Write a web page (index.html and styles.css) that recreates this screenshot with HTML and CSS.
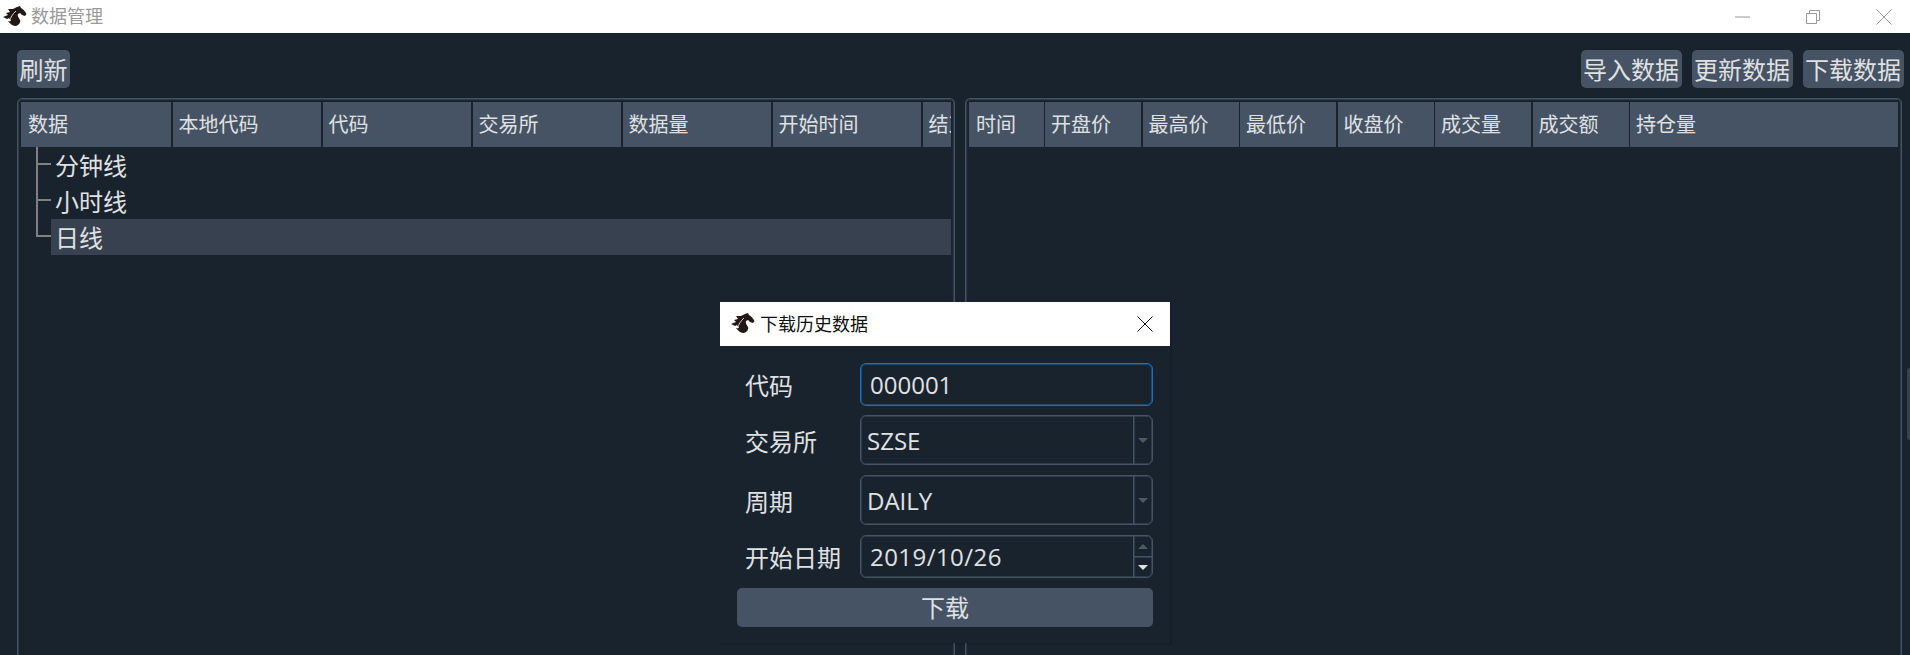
FILE: index.html
```html
<!DOCTYPE html>
<html lang="zh">
<head>
<meta charset="utf-8">
<title>数据管理</title>
<link rel="stylesheet" href="styles.css">
</head>
<body>
<svg class="defs" width="0" height="0" aria-hidden="true">
  <symbol id="horse" viewBox="0 0 24 22">
    <path d="M0 11 L5 9 L3 7 L7 6 L5 3 L10 3 L14 1 L17 0 L18 2 C20 3 22 5 23.5 8 L22 10 L19 9 L17 7 L15 8 C14 10 16 12 17 14 C18 16 16 19 13 20 C10 20 7 18 5 15 L8 15 L6 12 L4 13 Z" fill="#231815"/>
    <path d="M6.5 15.5 C7.5 11.5 9.5 8 13 5" fill="none" stroke="#fff" stroke-width=".8"/>
  </symbol>
</svg>
<div class="window">
  <header class="titlebar">
    <svg class="logo"><use href="#horse"/></svg>
    <span class="title">数据管理</span>
    <div class="winctl">
      <svg class="min" width="16" height="2" viewBox="0 0 16 2"><path d="M0 1H15" stroke="#999" stroke-width="1"/></svg>
      <svg width="16" height="16" viewBox="0 0 16 16"><path d="M1.5 4.5H11.5V14.5H1.5ZM4.5 4.5V1.5H14.5V11.5H11.5" fill="none" stroke="#999"/></svg>
      <svg width="16" height="16" viewBox="0 0 16 16"><path d="M.5 .5L15.5 15.5M15.5 .5L.5 15.5" stroke="#999"/></svg>
    </div>
  </header>
  <main class="content">
    <div class="toolbar">
      <button class="btn">刷新</button>
      <div class="spacer"></div>
      <button class="btn">导入数据</button>
      <button class="btn">更新数据</button>
      <button class="btn">下载数据</button>
    </div>
    <div class="panes">
      <section class="pane pane-left">
        <div class="thead">
          <div class="th w150 first">数据</div>
          <div class="th w150">本地代码</div>
          <div class="th w150">代码</div>
          <div class="th w150">交易所</div>
          <div class="th w150">数据量</div>
          <div class="th w150">开始时间</div>
          <div class="th rest">结束时间</div>
        </div>
        <div class="tree">
          <div class="row"><span class="branch"></span><span class="label">分钟线</span></div>
          <div class="row"><span class="branch"></span><span class="label">小时线</span></div>
          <div class="row last"><span class="branch"></span><span class="label sel">日线</span></div>
        </div>
      </section>
      <section class="pane pane-right">
        <div class="thead">
          <div class="th w75">时间</div>
          <div class="th w97">开盘价</div>
          <div class="th w97">最高价</div>
          <div class="th w97">最低价</div>
          <div class="th w97">收盘价</div>
          <div class="th w97">成交量</div>
          <div class="th w97">成交额</div>
          <div class="th rest">持仓量</div>
        </div>
      </section>
    </div>
    <div class="grip"></div>
  </main>
  <div class="dialog">
    <div class="dlg-title">
      <svg class="logo"><use href="#horse"/></svg>
      <span>下载历史数据</span>
      <svg class="dlg-close" width="16" height="16" viewBox="0 0 16 16"><path d="M.5 .5L15.5 15.5M15.5 .5L.5 15.5" stroke="#111"/></svg>
    </div>
    <div class="form">
      <div class="field f-code"><label>代码</label><div class="ctl focus"><span class="val">000001</span></div></div>
      <div class="field f-combo"><label>交易所</label><div class="ctl"><span class="val combo">SZSE</span><span class="drop"><i class="tri down dim"></i></span></div></div>
      <div class="field f-combo"><label>周期</label><div class="ctl"><span class="val combo">DAILY</span><span class="drop"><i class="tri down dim"></i></span></div></div>
      <div class="field f-date"><label>开始日期</label><div class="ctl"><span class="val date">2019/10/26</span><span class="spin"><span><i class="tri up dim"></i></span><span><i class="tri down"></i></span></span></div></div>
      <button class="btn dl">下载</button>
    </div>
  </div>
</div>
</body>
</html>
```

FILE: styles.css
```css
* { box-sizing: border-box; }
html, body { margin: 0; height: 100%; overflow: hidden; }
body {
  background: #19232D;
  color: #E0E1E3;
  font-family: "Open Sans", "Noto Sans CJK SC", sans-serif;
}
.defs { position: absolute; }
.window { position: relative; height: 655px; display: flex; flex-direction: column; }

.titlebar {
  height: 33px; background: #fff; display: flex; align-items: center;
  padding-left: 3px; flex: none;
}
.logo { width: 24px; height: 22px; flex: none; }
.title { color: #999; font-size: 18px; margin-left: 4px; line-height: 33px; }
.winctl { margin-left: auto; margin-right: 18px; display: flex; align-items: center; gap: 55px; }
.winctl .min { margin-right: -1px; }

.content { flex: 1; min-height: 0; padding: 17px 8px 0 17px; display: flex; flex-direction: column; position: relative; }
.toolbar { display: flex; gap: 10px; height: 38px; flex: none; margin-right: -1.5px; }
.spacer { flex: 1; }
.btn {
  background: #455364; color: #E0E1E3; border: 0; border-radius: 5px;
  font: inherit; font-size: 24px; line-height: 38px; height: 38px; padding: 1px 2.5px 0; white-space: nowrap;
}
.panes { display: flex; flex: 1; min-height: 0; margin-top: 10px; gap: 10px; margin-bottom: -8px; }
.pane {
  border: 1px solid #455364; border-radius: 5px; padding: 3px 3px 0; overflow: hidden;
  box-shadow: inset 0 0 0 1px rgba(69, 83, 100, .5);
}
.pane-left { width: 938px; flex: none; }
.pane-right { flex: 1; min-width: 0; }

.thead { display: flex; height: 45px; overflow: hidden; }
.th {
  background: #455364; font-size: 20px; line-height: 45px; padding-left: 6px;
  margin-right: 1.5px; flex: none; white-space: nowrap; overflow: hidden;
}
.th.w150 { width: 148.5px; }
.th.w150.first { width: 150px; padding-left: 7px; }
.th.w75 { width: 74.5px; padding-left: 7px; }
.th.w97 { width: 96px; }
.th.rest { flex: 1; min-width: 0; margin-right: 0; }

.tree { display: flex; flex-direction: column; }
.row { height: 36px; display: flex; position: relative; padding-left: 30px; }
.branch { position: absolute; left: 15px; top: 0; width: 15px; height: 18px; border-left: 2px solid #808080; border-bottom: 2px solid #808080; }
.row:not(.last) .branch { height: 36px; border-bottom: 0; }
.row:not(.last) .branch::after { content: ""; position: absolute; left: 0; top: 16px; width: 13px; height: 2px; background: #808080; }
.label { flex: 1; font-size: 24px; line-height: 37px; padding-left: 4px; }
.sel { background: #37414F; padding-left: 4px; }

.dialog {
  position: absolute; left: 720px; top: 302px; width: 450px; height: 341px;
  background: #19232D; box-shadow: 1px 1px 2px rgba(0,0,0,.2);
  display: flex; flex-direction: column;
}
.dlg-title { height: 44px; background: #fff; color: #111; display: flex; align-items: center; font-size: 18px; padding-left: 11px; flex: none; }
.dlg-title span { margin-left: 5px; line-height: 42px; }
.dlg-close { margin-left: auto; margin-right: 17px; }
.form { padding: 17px 17px 0; display: flex; flex-direction: column; }
.field { display: flex; align-items: stretch; }
.field label { width: 123px; padding-left: 8px; font-size: 24px; flex: none; display: flex; align-items: center; white-space: nowrap; }
.ctl {
  flex: 1; border: 1px solid #455364; border-radius: 6px; display: flex; font-size: 24px; overflow: hidden;
  box-shadow: inset 0 0 0 1px rgba(69, 83, 100, .5);
}
.ctl.focus { border-color: #1A72BB; box-shadow: inset 0 0 0 1px rgba(26, 114, 187, .5); }
.f-code { height: 43px; margin-bottom: 9px; }
.f-combo { height: 50px; margin-bottom: 10px; }
.f-date { height: 43px; margin-bottom: 10px; }
.val { flex: 1; padding-left: 9px; display: flex; align-items: center; }
.val.combo { padding-left: 6px; }
.val.date { letter-spacing: .45px; }
.drop, .spin { width: 19.5px; border-left: 1px solid #455364; box-shadow: inset 1px 0 0 rgba(69, 83, 100, .5); }
.drop { display: flex; align-items: center; justify-content: center; }
.spin { display: flex; flex-direction: column; }
.spin > span { flex: 1; display: flex; align-items: center; justify-content: center; }
.spin > span + span { border-top: 1px solid #455364; box-shadow: inset 0 1px 0 rgba(69, 83, 100, .5); }
.tri { width: 0; height: 0; border-left: 5.5px solid transparent; border-right: 5.5px solid transparent; display: block; }
.tri.down { border-top: 5.5px solid #E0E1E3; }
.tri.up { border-bottom: 5.5px solid #E0E1E3; }
.tri.down.dim { border-top-color: #4B5969; }
.tri.up.dim { border-bottom-color: #4B5969; }
.btn.dl { height: 39px; align-self: stretch; }

.grip { position: absolute; right: 0; top: 335px; width: 3px; height: 72px; background: #37414F; border-radius: 2px 0 0 2px; }
```
